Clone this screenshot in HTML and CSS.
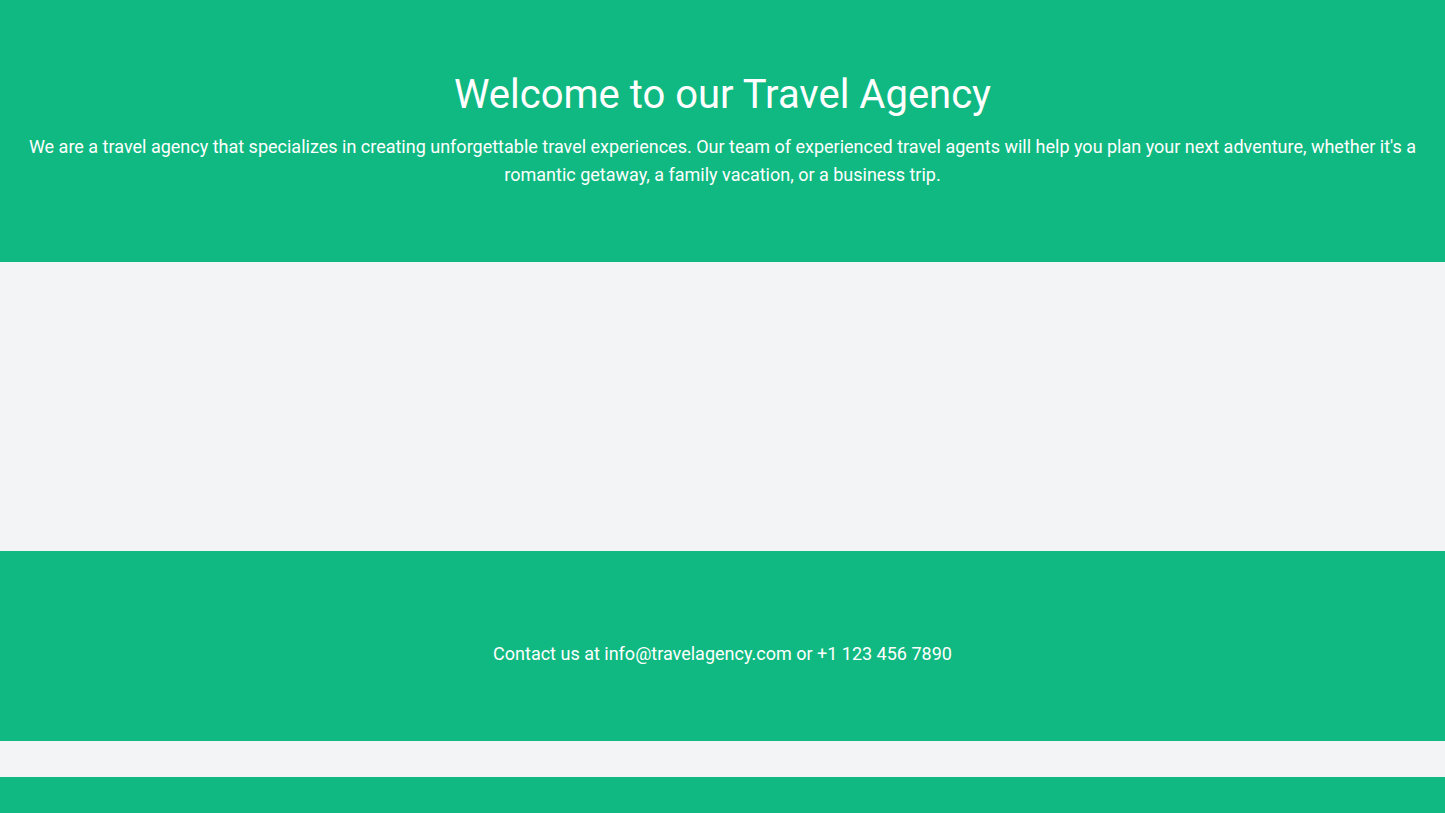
FILE: index.html
```
<!DOCTYPE html>
<html lang="en">
<head>
    <meta charset="UTF-8">
    <meta name="viewport" content="width=device-width, initial-scale=1.0">
    <title>Travel Agency</title>
    <link rel="stylesheet" href="styles.css">
</head>
<body>
    <header class="hero">
        <h1>Welcome to our Travel Agency</h1>
        <p>We are a travel agency that specializes in creating unforgettable travel experiences. Our team of experienced travel agents will help you plan your next adventure, whether it's a romantic getaway, a family vacation, or a business trip.</p>
    </header>

    <main class="content"></main>

    <section class="contact">
        <p>Contact us at info@travelagency.com or +1 123 456 7890</p>
    </section>

    <div class="spacer"></div>

    <footer class="site-footer"></footer>
</body>
</html>
```
FILE: styles.css
```
body {
    margin: 0;
    padding: 0;
    background-color: #f3f4f6;
    color: white;
    font-family: Roboto, "Liberation Sans", sans-serif;
    text-align: center;
}
.hero {
    background-color: #10b981;
    padding: 73px 16px 0;
    height: 262px;
    box-sizing: border-box;
}
.hero h1 {
    margin: 0 0 16px;
    font-size: 40px;
    line-height: 44px;
    font-weight: 400;
}
.hero p {
    margin: 0;
    font-size: 18px;
    line-height: 28px;
}
.content {
    height: 289px;
}
.contact {
    background-color: #10b981;
    height: 190px;
    display: flex;
    align-items: center;
    justify-content: center;
    padding-top: 16px;
    box-sizing: border-box;
}
.contact p {
    margin: 0;
    font-size: 18px;
    line-height: 28px;
}
.spacer {
    height: 36px;
}
.site-footer {
    background-color: #10b981;
    height: 36px;
}
```
